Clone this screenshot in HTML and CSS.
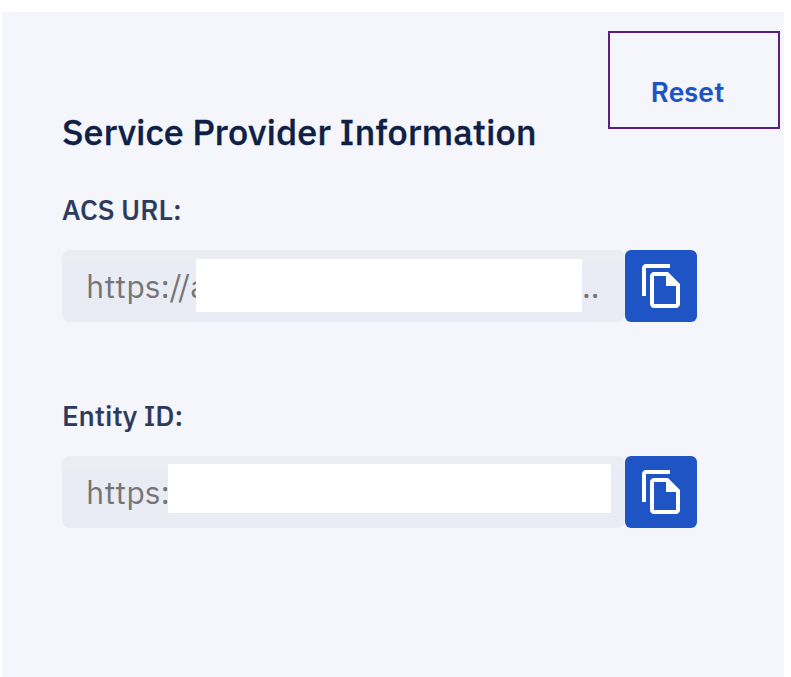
FILE: index.html
```html
<!DOCTYPE html>
<html lang="en">
<head>
<meta charset="utf-8">
<title>Service Provider Information</title>
<link rel="stylesheet" href="styles.css">
</head>
<body>
<main class="panel">
  <header class="header">
    <h1 class="title"><span>Service Provider Information</span></h1>
    <button class="reset" type="button"><span>Reset</span></button>
  </header>
  <section class="field">
    <h2 class="label acs">ACS URL:</h2>
    <div class="row">
      <div class="value"><span class="prefix prefix-acs">https://a</span><span class="mask mask-acs"></span><span class="dots">..</span></div>
      <button class="copy" type="button" aria-label="Copy">
        <svg viewBox="0 0 24 24" width="48" height="48"><path d="M16 1H4c-1.1 0-2 .9-2 2v14h2V3h12V1zm-1 4H8c-1.1 0-1.99.9-1.99 2L6 21c0 1.1.89 2 1.99 2H19c1.1 0 2-.9 2-2V11l-6-6zM8 21V7h6v5h5v9H8z"/></svg>
      </button>
    </div>
  </section>
  <section class="field">
    <h2 class="label entity">Entity ID:</h2>
    <div class="row">
      <div class="value"><span class="prefix prefix-entity">https:</span><span class="mask mask-entity"></span></div>
      <button class="copy" type="button" aria-label="Copy">
        <svg viewBox="0 0 24 24" width="48" height="48"><path d="M16 1H4c-1.1 0-2 .9-2 2v14h2V3h12V1zm-1 4H8c-1.1 0-1.99.9-1.99 2L6 21c0 1.1.89 2 1.99 2H19c1.1 0 2-.9 2-2V11l-6-6zM8 21V7h6v5h5v9H8z"/></svg>
      </button>
    </div>
  </section>
</main>
</body>
</html>
```
FILE: styles.css
```css
* { box-sizing: border-box; }
body {
  margin: 0;
  height: 677px;
  padding: 12px 7px 0 2px;
  background: #fff;
  font-family: "IBM Plex Sans", "Noto Sans", sans-serif;
  overflow: hidden;
}
.panel {
  height: 665px;
  padding: 19px 4px 0 60px;
  background: #f5f6fb;
}
.header {
  display: flex;
  justify-content: space-between;
  height: 98px;
}
.title {
  margin: 76px 0 0;
  font-size: 36px;
  line-height: 50px;
  font-weight: 500;
  white-space: nowrap;
  color: #0f1f45;
  -webkit-text-stroke: 0.3px #0f1f45;
}
.reset {
  width: 172px;
  height: 98px;
  padding: 24px 13px 0 0;
  border: 2px solid #5a1f80;
  background: transparent;
  color: #1f54c5;
  font: 600 28px/40px "IBM Plex Sans", "Noto Sans", sans-serif;
}
.field { height: 206px; padding-top: 61px; }
.label {
  margin: 0;
  height: 60px;
  font-size: 28px;
  line-height: 40px;
  font-weight: 500;
  color: #2c3a5c;
  -webkit-text-stroke: 0.2px #2c3a5c;
}
.row { display: flex; }
.value {
  display: flex;
  width: 563px;
  height: 72px;
  padding-left: 24px;
  border-radius: 8px;
  background: linear-gradient(#ecedf2 0 10px, #e9ecf4 13px);
  font-size: 32px;
  line-height: 72px;
  color: #757575;
}
.prefix { overflow: hidden; white-space: nowrap; }
.prefix-acs { width: 110px; }
.prefix-entity { width: 82px; }
.mask { background: #fff; }
.mask-acs { width: 386px; height: 53px; margin-top: 9px; }
.mask-entity { width: 443px; height: 49px; margin-top: 8px; }
.copy {
  width: 72px;
  height: 72px;
  padding: 12px 11px 12px 13px;
  border: 0;
  border-radius: 6px;
  background: #1f54c5;
}
.copy svg { display: block; fill: #fff; }
```
